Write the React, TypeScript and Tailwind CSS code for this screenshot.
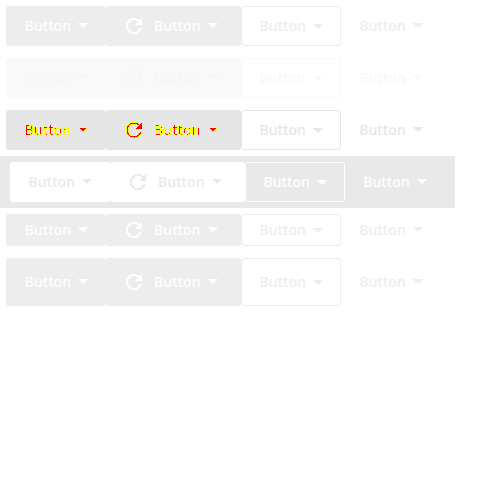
import React from "react";

type RowProps = {
  fill: string;
  label: string;
  outline: string;
  outlineText: string;
  plainText: string;
  height: string;
  changed?: boolean;
};

function Caret({ path = "M7 9l5 5 5-5z" }: { path?: string }) {
  return (
    <svg className="h-6 w-6 shrink-0" viewBox="0 0 24 24" fill="currentColor">
      <path d={path} />
    </svg>
  );
}

function Refresh() {
  return (
    <svg className="mr-2 h-6 w-6 shrink-0" viewBox="0 0 24 24" fill="currentColor">
      <path d="M17.65 6.35C16.2 4.9 14.21 4 12 4c-4.42 0-7.99 3.58-7.99 8s3.57 8 7.99 8c3.73 0 6.84-2.55 7.73-6h-2.08c-.82 2.33-3.04 4-5.65 4-3.31 0-6-2.69-6-6s2.69-6 6-6c1.66 0 3.14.69 4.22 1.78L13 11h7V4l-2.35 2.35z" />
    </svg>
  );
}

function ButtonRow({ fill, label, outline, outlineText, plainText, height, changed }: RowProps) {
  const content = changed ? "flex items-center [filter:url(#changed)]" : "flex items-center";
  const caret = changed ? "M7 9.15l5 5 5-5z" : "M7 9l5 5 5-5z";
  return (
    <div className={`flex ${height}`}>
      <button className={`flex w-[99.8px] items-center rounded-[3px] pl-[18px] ${fill} ${label}`}>
        <span className={content}><span className="w-[47px] pl-[0.6px]">Button</span><Caret path={caret} /></span>
      </button>
      <button className={`flex w-[135.4px] items-center rounded-[3px] pl-4 ${fill} ${label}`}>
        <span className={content}><Refresh /><span className="w-[47px]">Button</span><Caret path={caret} /></span>
      </button>
      <button className={`flex w-[99.8px] items-center rounded-[3px] border pl-[17px] ${outline} ${outlineText}`}>
        <span className="w-[47px]">Button</span><Caret path="M7 10l5 5 5-5z" />
      </button>
      <button className={`flex w-[100px] items-center pl-[18px] ${plainText}`}>
        <span className="w-[47px]">Button</span><Caret />
      </button>
    </div>
  );
}

export default function App() {
  return (
    <main className="h-[500px] w-[500px] overflow-hidden bg-white pt-1.5 font-['Noto_Sans',sans-serif] text-sm font-[550] leading-5 tracking-[0.09px]">
      <svg className="absolute h-0 w-0" aria-hidden="true">
        <filter id="changed" x="-5%" y="-10%" width="110%" height="120%" colorInterpolationFilters="sRGB">
          <feComponentTransfer in="SourceAlpha" result="edge">
            <feFuncR type="linear" slope="0" intercept="1" />
            <feFuncG type="linear" slope="0" intercept="1" />
            <feFuncA type="linear" slope="50" intercept="-3" />
          </feComponentTransfer>
          <feComponentTransfer in="SourceAlpha" result="core">
            <feFuncR type="linear" slope="0" intercept="1" />
            <feFuncA type="linear" slope="100" intercept="-97" />
          </feComponentTransfer>
          <feMerge><feMergeNode in="edge" /><feMergeNode in="core" /></feMerge>
        </filter>
      </svg>
      <div className="flex flex-col gap-3 pl-1.5">
        <ButtonRow height="h-10" fill="bg-[#ededed]" label="text-white" outline="border-[#ededed]" outlineText="text-[#ededed]" plainText="text-[#ededed]" />
        <ButtonRow height="h-10" fill="bg-[#f9f9f9]" label="text-[#f6f6f6]" outline="border-[#f8f8f8]" outlineText="text-[#f8f8f8]" plainText="text-[#f8f8f8]" />
        <ButtonRow height="h-10" fill="bg-[#e6e6e6]" label="text-white" outline="border-[#e6e6e6]" outlineText="text-[#e6e6e6]" plainText="text-[#e6e6e6]" changed />
      </div>
      <div className="my-1.5 w-[455px] bg-[#e9e9e9] py-1.5 pl-2.5">
        <ButtonRow height="h-10" fill="bg-white" label="text-[#e9e9e9]" outline="border-white" outlineText="text-white" plainText="text-white" />
      </div>
      <div className="flex flex-col gap-3 pl-1.5">
        <ButtonRow height="h-8" fill="bg-[#ededed]" label="text-white" outline="border-[#ededed]" outlineText="text-[#ededed]" plainText="text-[#ededed]" />
        <ButtonRow height="h-12" fill="bg-[#ededed]" label="text-white" outline="border-[#ededed]" outlineText="text-[#ededed]" plainText="text-[#ededed]" />
      </div>
    </main>
  );
}
